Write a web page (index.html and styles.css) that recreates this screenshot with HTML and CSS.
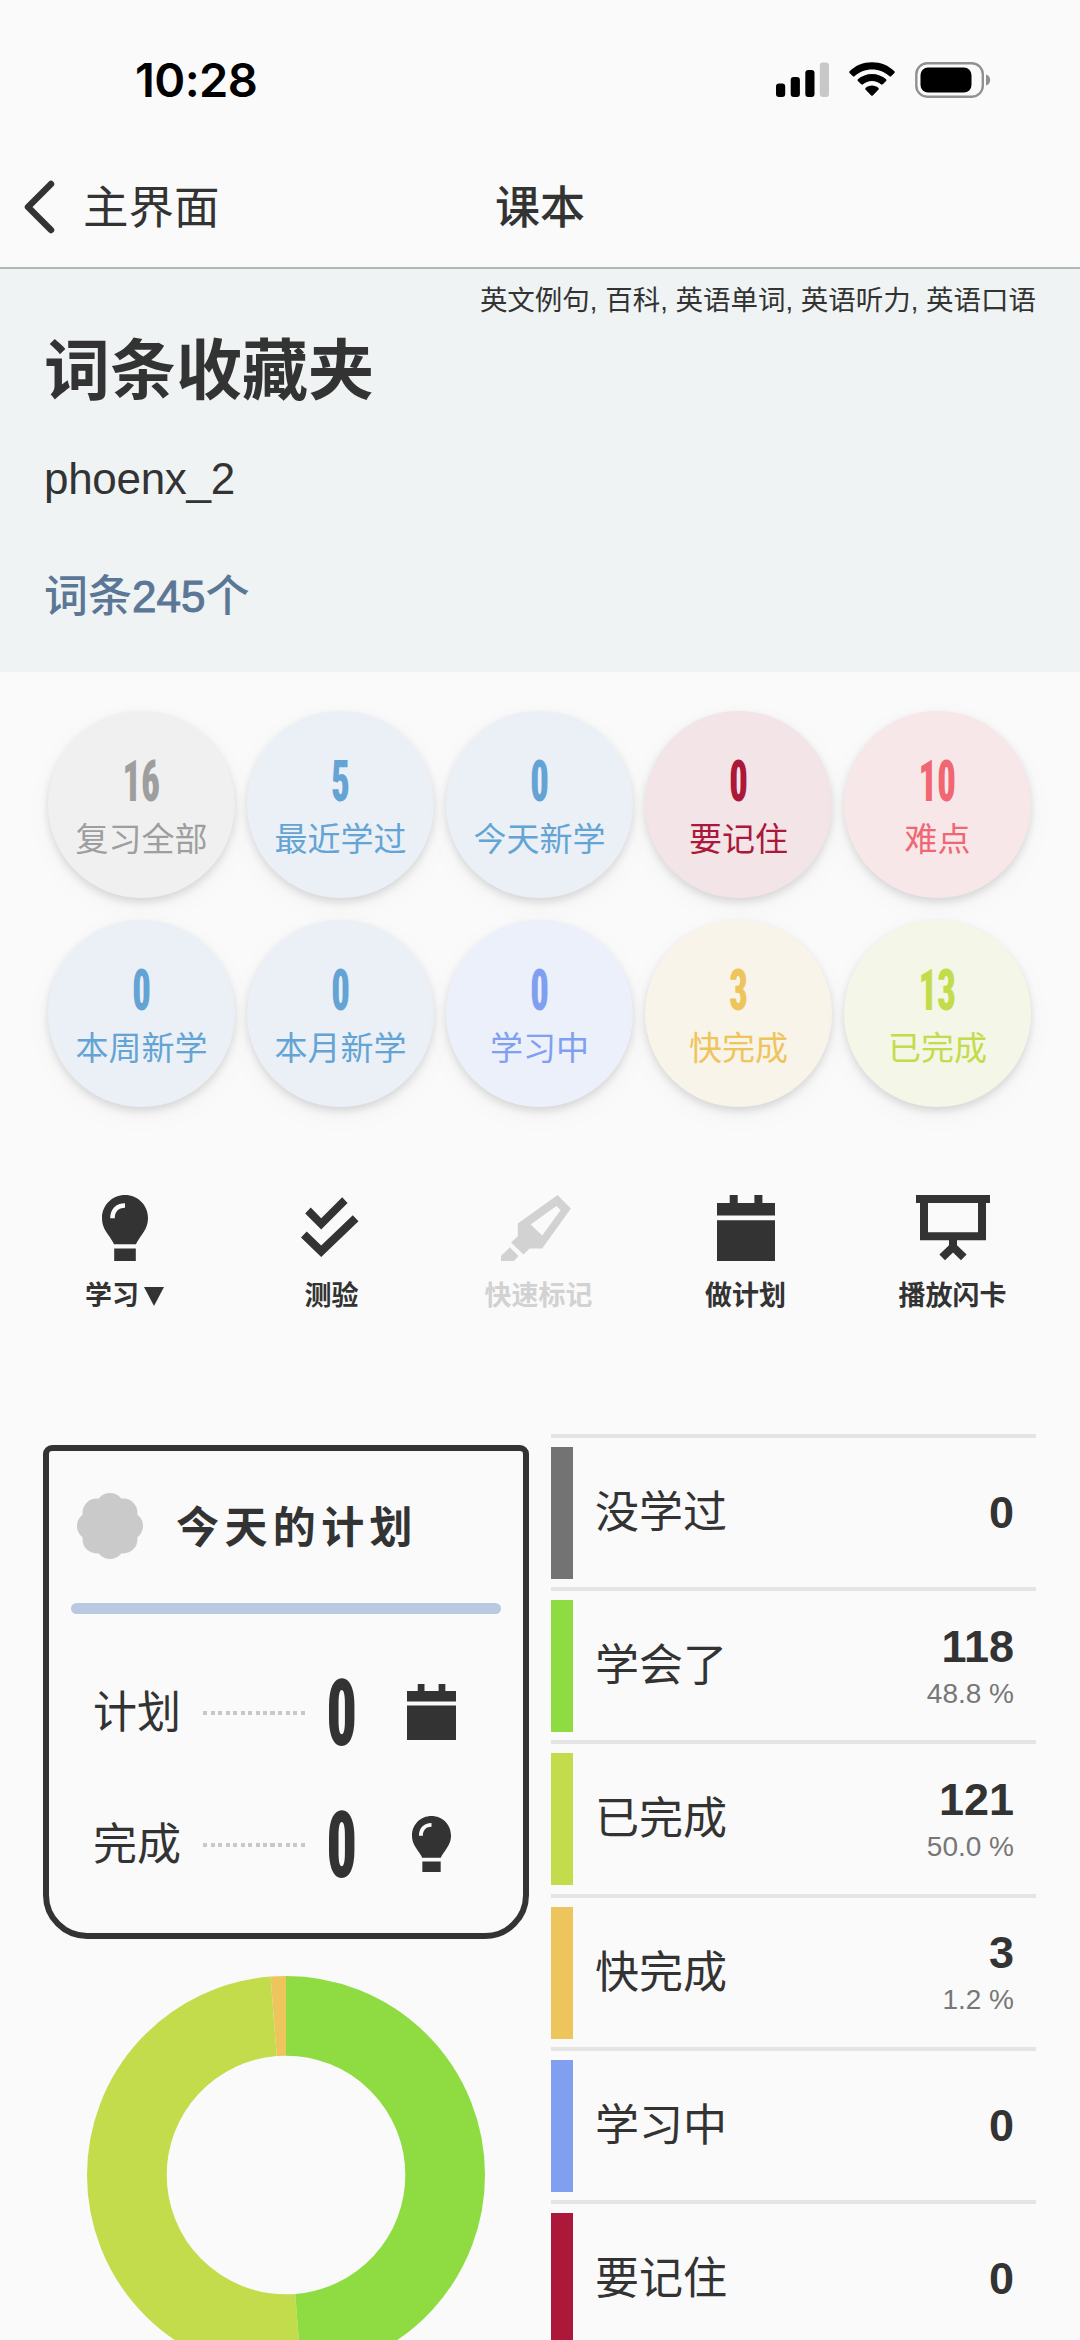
FILE: index.html
```html
<!DOCTYPE html>
<html lang="zh-CN">
<head>
<meta charset="utf-8">
<title>课本</title>
<link rel="stylesheet" href="styles.css">
</head>
<body>
<svg class="defs" width="0" height="0" aria-hidden="true">
  <symbol id="bulb" viewBox="0 0 46 66">
    <path d="M23 0C10.300 0 0 10 0 23c0 7 2.600 11.500 5.800 16.300C8.500 43.200 10.800 46.500 12 49.200h22c1.200-2.700 3.500-6 6.200-9.900C43.400 34.500 46 30 46 23 46 10 35.700 0 23 0zM12.200 53.600h21.600V66H12.200z"/>
    <path class="glint" d="M8.200 23.200C8.200 14 14 8.200 23 8.200v4.600c-6.400 0-10.200 4-10.200 10.400z"/>
  </symbol>
  <symbol id="calendar" viewBox="0 0 58 66">
    <path d="M0 8h12.700V0h8v8h16.700V0h8v8H58v12.600H0zM0 25.200h58V66H0z"/>
  </symbol>
</svg>

<div class="status">
  <span class="time">10:28</span>
  <div class="indicators">
    <svg width="53" height="35" viewBox="0 0 53 35"><rect x="0" y="21.500" width="9.200" height="13.500" rx="3"/><rect x="14.700" y="15" width="9.200" height="20" rx="3"/><rect x="29.300" y="8" width="9.200" height="27" rx="3"/><rect x="43.800" y="0.500" width="9.200" height="34.500" rx="3" fill="#c8c8c8"/></svg>
    <svg width="46" height="35" viewBox="0 0 46 35"><path d="M23 .3C31.700 .3 39.600 3.600 45.400 9.200c.5.500.5 1.200 0 1.700l-3.300 3.300c-.4.400-1.100.4-1.600 0C35.900 9.900 29.700 7.400 23 7.400S10.100 9.900 5.500 14.200c-.5.400-1.200.4-1.600 0L.6 10.900c-.5-.5-.5-1.200 0-1.700C6.400 3.600 14.300 .3 23 .3z"/><path d="M23 12c5.400 0 10.300 2 14.100 5.300.5.500.5 1.200 0 1.700l-3.300 3.300c-.4.400-1.100.4-1.600.1C29.700 20.300 26.500 19 23 19s-6.700 1.300-9.200 3.400c-.5.300-1.200.3-1.600-.1L8.900 19c-.5-.5-.5-1.200 0-1.700C12.700 14 17.600 12 23 12z"/><path d="M23 23.600c2.500 0 4.700.9 6.400 2.300.5.500.5 1.200.1 1.700l-5.700 5.800c-.5.500-1.200.5-1.600 0l-5.700-5.800c-.4-.5-.4-1.200.1-1.700 1.700-1.400 3.900-2.300 6.400-2.300z"/></svg>
    <svg width="76" height="36" viewBox="0 0 76 36"><rect x="1.300" y="1.300" width="66.500" height="33.400" rx="11" fill="none" stroke="#909090" stroke-width="2.400"/><rect x="5.500" y="5.500" width="51" height="25" rx="7.500"/><path d="M71 12.500c2.600.8 4.200 3 4.200 5.500s-1.600 4.700-4.200 5.500z" fill="#909090"/></svg>
  </div>
</div>

<nav class="navbar">
  <div class="back">
    <svg width="32" height="54" viewBox="0 0 32 54"><path d="M28 4L5 27l23 23" fill="none" stroke="#333" stroke-width="6.500" stroke-linecap="round" stroke-linejoin="round"/></svg>
    <span>主界面</span>
  </div>
  <h1 class="nav-title">课本</h1>
  <div></div>
</nav>

<header class="book">
  <p class="tags">英文例句, 百科, 英语单词, 英语听力, 英语口语</p>
  <h2 class="book-name">词条收藏夹</h2>
  <p class="author">phoenx_2</p>
  <p class="count">词条<span>245</span>个</p>
</header>

<section class="circles">
  <div class="circle gray"><b>16</b><span>复习全部</span></div>
  <div class="circle blue"><b>5</b><span>最近学过</span></div>
  <div class="circle blue"><b>0</b><span>今天新学</span></div>
  <div class="circle crimson"><b>0</b><span>要记住</span></div>
  <div class="circle pink"><b>10</b><span>难点</span></div>
  <div class="circle blue"><b>0</b><span>本周新学</span></div>
  <div class="circle blue"><b>0</b><span>本月新学</span></div>
  <div class="circle violet"><b>0</b><span>学习中</span></div>
  <div class="circle amber"><b>3</b><span>快完成</span></div>
  <div class="circle lime"><b>13</b><span>已完成</span></div>
</section>

<section class="actions">
  <div class="action"><svg width="46" height="66"><use href="#bulb"/></svg><span>学习<i class="caret"></i></span></div>
  <div class="action quiz"><svg width="58" height="66" viewBox="0 0 58 66"><path d="M9.700 12.600L20.200 23.300 41.200 2.300l5.400 5.600L20.200 34.600 4.200 18.600zM5.700 36.600l14.500 14L51.800 20.300l5.700 5.900L20.200 62 0 42.600z"/></svg><span>测验</span></div>
  <div class="action disabled"><svg width="70" height="66" viewBox="0 0 70 66"><path fill-rule="evenodd" d="M0 66v-5l8.900-8.700 8.600 8.700-4.600 5zM10 47.600l6.800-6.300V28.600L56.600 0l13.300 13.600L41.200 53.600H28.600l-6.100 6zM29.700 29.600l11.500 11L59.500 15.200l-4-4.200z"/></svg><span>快速标记</span></div>
  <div class="action"><svg width="58" height="66"><use href="#calendar"/></svg><span>做计划</span></div>
  <div class="action"><svg width="74" height="66" viewBox="0 0 74 66"><path fill-rule="evenodd" d="M0 0h74v8h-4v37.300H41v5l9.600 9.300-5.600 5.700-8-7.700-8 7.700-5.600-5.700 9.600-9.300v-5H4V8H0zM12 8v29.300h50V8z"/></svg><span>播放闪卡</span></div>
</section>

<main class="columns">
  <div class="left">
    <section class="plan">
      <div class="plan-head">
        <svg width="66" height="66" viewBox="-33 -33 66 66" fill="#cacaca"><circle r="27"/><circle cy="-19" r="14"/><circle cx="13.400" cy="-13.400" r="14"/><circle cx="19" r="14"/><circle cx="13.400" cy="13.400" r="14"/><circle cy="19" r="14"/><circle cx="-13.400" cy="13.400" r="14"/><circle cx="-19" r="14"/><circle cx="-13.400" cy="-13.400" r="14"/></svg>
        <h3>今天的计划</h3>
      </div>
      <div class="bar"></div>
      <div class="plan-row"><span>计划</span><i class="dots"></i><b><em>0</em></b><svg width="49" height="56"><use href="#calendar"/></svg></div>
      <div class="plan-row"><span>完成</span><i class="dots"></i><b><em>0</em></b><svg width="49" height="56"><use href="#bulb"/></svg></div>
    </section>
    <svg class="donut" width="398" height="398" viewBox="-199 -199 398 398">
      <g fill="none" stroke-width="79.700" transform="rotate(-90)">
        <circle r="159.150" pathLength="242" stroke="#c2dc4b" stroke-dasharray="121 121" stroke-dashoffset="-118"/>
        <circle r="159.150" pathLength="242" stroke="#8fdc42" stroke-dasharray="118 124"/>
        <circle r="159.150" pathLength="242" stroke="#eec45c" stroke-dasharray="3 239" stroke-dashoffset="-239"/>
      </g>
    </svg>
  </div>
  <ul class="stats">
    <li><i class="tab t-gray"></i><span>没学过</span><div class="num"><b>0</b></div></li>
    <li><i class="tab t-green"></i><span>学会了</span><div class="num"><b>118</b><small>48.8 %</small></div></li>
    <li><i class="tab t-lime"></i><span>已完成</span><div class="num"><b>121</b><small>50.0 %</small></div></li>
    <li><i class="tab t-amber"></i><span>快完成</span><div class="num"><b>3</b><small>1.2 %</small></div></li>
    <li><i class="tab t-violet"></i><span>学习中</span><div class="num"><b>0</b></div></li>
    <li><i class="tab t-crimson"></i><span>要记住</span><div class="num"><b>0</b></div></li>
  </ul>
</main>
</body>
</html>
```
FILE: styles.css
```css
* { box-sizing: border-box; margin: 0; padding: 0; }
html { height: 2340px; overflow: hidden; }
body {
  width: 1080px;
  height: 2340px;
  overflow: hidden;
  background: #fafafa;
  color: #333;
  font-family: "Liberation Sans", "Noto Sans CJK SC", sans-serif;
}
i, em { font-style: normal; }
svg { display: block; flex: none; }
.defs { position: absolute; }
.glint { fill: #fafafa; }

.status {
  height: 146px;
  padding: 52px 89px 0 135px;
  display: flex;
  justify-content: space-between;
  align-items: flex-start;
}
.time {
  font: 600 47px/56px Inter, sans-serif;
  letter-spacing: -0.6px;
  color: #000;
}
.indicators { display: flex; gap: 20px; padding-top: 10px; }

.navbar {
  height: 123px;
  display: grid;
  grid-template-columns: 1fr auto 1fr;
  align-items: center;
  border-bottom: 2px solid #b4b8b9;
}
.back {
  display: flex;
  align-items: center;
  gap: 28px;
  padding-left: 23px;
  font-size: 45.500px;
  line-height: 60px;
}
.back span, .nav-title { padding-top: 5px; }
.nav-title { font-size: 45px; line-height: 60px; font-weight: 500; }

.book {
  height: 403px;
  padding: 9px 44px 0;
  background: #eff3f4;
}
.tags { font-size: 27.500px; line-height: 46px; text-align: right; }
.book-name { padding-top: 2px; font-size: 66px; line-height: 90px; font-weight: 700; }
.author { margin-top: 33px; font-size: 44px; line-height: 60px; letter-spacing: -0.3px; }
.count { margin-top: 58px; font-size: 44px; line-height: 60px; font-weight: 500; color: #5b7796; }
.count span { -webkit-text-stroke: 1px #5b7796; }

.circles {
  padding: 39px 0 0 48px;
  display: grid;
  grid-template-columns: repeat(5, 187px);
  gap: 22px 12px;
}
.circle {
  height: 187px;
  border-radius: 50%;
  display: flex;
  flex-direction: column;
  align-items: center;
  padding-top: 42px;
  box-shadow: 0 4px 8px rgba(0, 0, 0, .13), 0 8px 30px rgba(0, 0, 0, .03);
}
.circle b {
  font: 900 57px/58px Roboto, sans-serif;
  font-stretch: 75%;
  transform: scaleX(.64);
}
.circle span { margin-top: 9px; font-size: 33px; line-height: 40px; }
.gray { background: #f0f0f0; color: #9e9e9e; }
.blue { background: #ebf0f7; color: #64a4d4; }
.violet { background: #ecf0fa; color: #819ff0; }
.crimson { background: #f2e4e7; color: #ab1839; }
.pink { background: #f7e7e8; color: #f06673; }
.amber { background: #f8f4e9; color: #eec45c; }
.lime { background: #f4f6e7; color: #c2dc4b; }

.actions {
  padding: 88px 0 0 21px;
  display: grid;
  grid-template-columns: repeat(5, 207px);
}
.action {
  display: flex;
  flex-direction: column;
  align-items: center;
  gap: 15px;
  fill: #333;
}
.action span {
  display: flex;
  align-items: center;
  font-size: 27px;
  line-height: 40px;
  font-weight: 700;
}
.quiz svg { margin-right: 3px; }
.caret {
  margin-left: 5px;
  border: 10px solid transparent;
  border-top: 19px solid #333;
  border-bottom: 0;
}
.disabled { color: #d2d2d2; fill: #d2d2d2; }
.disabled svg { margin-right: 6px; }

.columns {
  padding: 118px 44px 0 43px;
  display: flex;
  justify-content: space-between;
}
.left { width: 486px; padding-top: 11px; }
.plan {
  height: 494px;
  border: 6px solid #333;
  border-radius: 9px 9px 44px 44px;
  padding: 42px 22px 0;
}
.plan-head { display: flex; align-items: center; gap: 33px; padding-left: 6px; }
.plan-head h3 { padding-top: 3px; font-size: 43px; line-height: 60px; letter-spacing: 5.400px; }
.bar { height: 11px; margin-top: 44px; border-radius: 6px; background: #b9c9e1; }
.plan-row {
  height: 132px;
  display: flex;
  align-items: center;
  padding-left: 22px;
  font-size: 44px;
  line-height: 60px;
  fill: #333;
}
.plan-row span { padding-top: 2px; }
.bar + .plan-row { margin-top: 32px; }
.dots {
  width: 102px;
  height: 4px;
  margin: 1px 0 0 22px;
  background: repeating-linear-gradient(90deg, #c8c8c8 0 4px, transparent 4px 7.500px);
}
.plan-row b { width: 73px; padding-top: 3px; display: flex; justify-content: center; font: 900 93px/100px Roboto, sans-serif; font-stretch: 75%; }
.plan-row em { transform: scaleX(.64); }
.plan-row svg { margin-left: 29px; }
.donut { margin: 37px auto 0; }

.stats { width: 485px; list-style: none; }
.stats li {
  height: 153.200px;
  border-top: 4px solid #e4e4e4;
  padding: 9px 22px 8.200px 0;
  display: flex;
  align-items: center;
}
.tab { width: 22px; align-self: stretch; }
.stats span { margin-left: 22px; font-size: 44px; line-height: 60px; }
.num { margin-left: auto; display: flex; flex-direction: column; align-items: flex-end; }
.num b { font-size: 45px; line-height: 50px; }
.num small { font-size: 28px; line-height: 40px; margin: 2px 0 -3px; color: #777; }
.t-gray { background: #737373; }
.t-green { background: #8fdc42; }
.t-lime { background: #c2dc4b; }
.t-amber { background: #eec45c; }
.t-violet { background: #819ff0; }
.t-crimson { background: #ab1839; }
```
